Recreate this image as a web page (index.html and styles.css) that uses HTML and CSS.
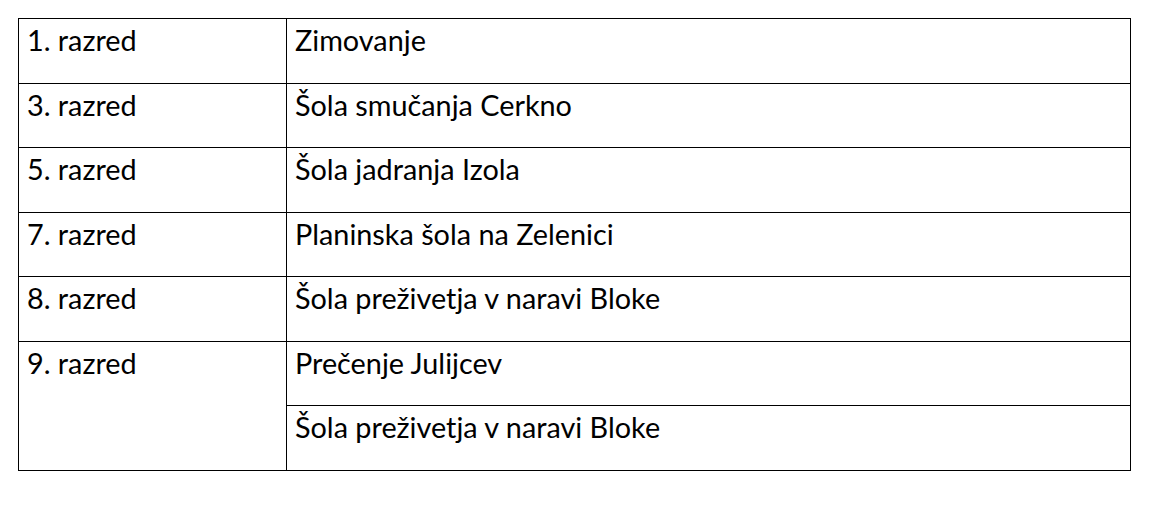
FILE: index.html
```html
<!DOCTYPE html>
<html>
<head>
<meta charset="utf-8">
<link rel="stylesheet" href="styles.css">
</head>
<body>
<div class="page">
<table class="plan">
  <tr><td class="grade">1. razred</td><td class="trip">Zimovanje</td></tr>
  <tr><td class="grade">3. razred</td><td class="trip">Šola smučanja Cerkno</td></tr>
  <tr><td class="grade">5. razred</td><td class="trip">Šola jadranja Izola</td></tr>
  <tr><td class="grade">7. razred</td><td class="trip">Planinska šola na Zelenici</td></tr>
  <tr><td class="grade">8. razred</td><td class="trip">Šola preživetja v naravi Bloke</td></tr>
  <tr><td class="grade" rowspan="2">9. razred</td><td class="trip">Prečenje Julijcev</td></tr>
  <tr><td class="trip">Šola preživetja v naravi Bloke</td></tr>
</table>
</div>
</body>
</html>
```

FILE: styles.css
```css
html, body {
  margin: 0;
  padding: 0;
  background: #ffffff;
}
.page {
  padding: 18px 0 0 18px;
}
.plan {
  border-collapse: collapse;
  width: 1113px;
  font-family: Lato, "Liberation Sans", sans-serif;
  font-size: 28.8px;
  color: #000;
  table-layout: fixed;
}
.plan td {
  border: 1px solid #000;
  height: 64.5px;
  box-sizing: border-box;
  vertical-align: top;
  padding: 5px 8px 0 8px;
  line-height: 32px;
}
.grade {
  width: 268px;
}
.trip {
  padding-left: 9px;
}
```
